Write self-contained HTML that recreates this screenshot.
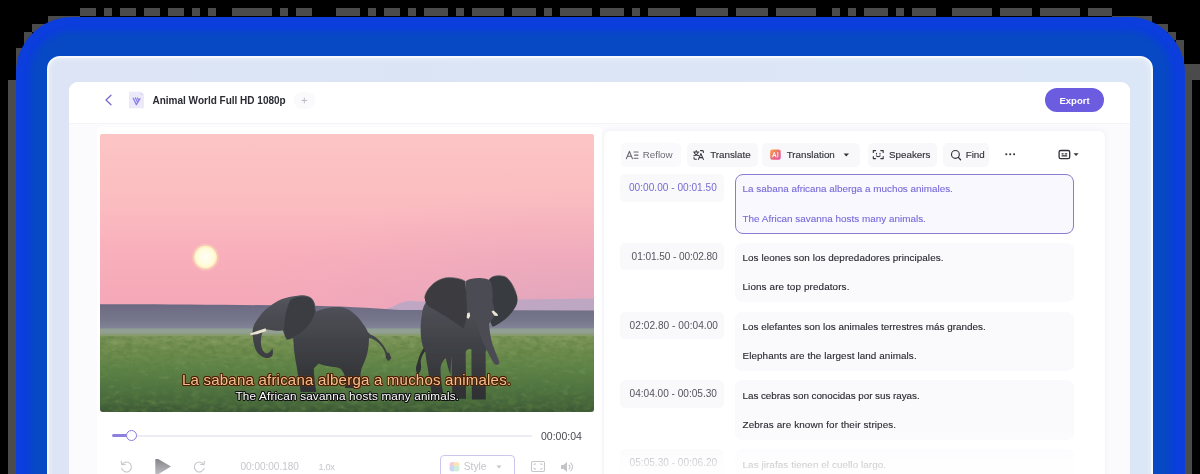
<!DOCTYPE html>
<html>
<head>
<meta charset="utf-8">
<style>
*{box-sizing:border-box;margin:0;padding:0}
html,body{width:1200px;height:474px;overflow:hidden;background:#000;font-family:"Liberation Sans",sans-serif;}
#stage{position:relative;width:1200px;height:474px;overflow:hidden;background:#000}
.abs{position:absolute}
#blue{left:15.5px;top:16.5px;width:1169px;height:520px;border-radius:56px;background:#0b3edc}
#blue2{left:29.5px;top:30.5px;width:1141px;height:520px;border-radius:42px;background:#0748c5;filter:blur(2.5px)}
#frame{left:47px;top:56px;width:1106px;height:460px;border-radius:13px;background:linear-gradient(90deg,#dce4f5 0,#dbe6f6 100%);border:2px solid #f6f8fd;box-shadow:inset 0 0 6px rgba(255,255,255,.55)}
#inner{left:69.2px;top:81.7px;width:1061.3px;height:420px;border-radius:9px 9px 0 0;background:#fbfbfe}
#hdr{left:69.2px;top:81.7px;width:1061.3px;height:42.6px;background:#fff;border-bottom:1px solid #f3f3f8;border-radius:9px 9px 0 0}
.t{position:absolute;white-space:nowrap;line-height:12px;height:12px;filter:blur(.3px)}
#title{left:152.5px;top:94.6px;font-size:10px;font-weight:bold;color:#2a2a33}
#export{left:1045px;top:88px;width:59px;height:24px;border-radius:12px;background:#6b5ce0}
#exportt{left:1059.5px;top:94.5px;font-size:9.5px;color:#fff;font-weight:bold}
#plus{left:294px;top:92px;width:21px;height:17px;border-radius:8px;background:#fafafc}
/* left card */
#lcard{left:96.7px;top:126.5px;width:505px;height:380px;background:#fff;border-radius:4px}
#video{left:100px;top:134px;width:494px;height:277.5px;border-radius:3px;overflow:hidden;background:#f9b9bd}
/* right panel */
#rpanel{left:604px;top:131px;width:501px;height:380px;background:#fff;border-radius:6px;box-shadow:0 0 5px rgba(120,120,180,.12)}
.tb{position:absolute;top:143px;height:24px;border-radius:5px;background:#f8f8fb}
.tbt{font-size:9.8px;color:#33333b;top:148.9px;-webkit-text-stroke:.15px #33333b}
.time{position:absolute;left:620px;width:104px;height:27.5px;border-radius:5px;background:#f9f9fc}
.tt{font-size:10.1px;color:#55555f}
.row{position:absolute;left:734.5px;width:339px;height:59.5px;border-radius:7px;background:#fafafd}
.rt{font-size:9.9px;color:#26262e;left:742.5px;-webkit-text-stroke:.12px currentColor}
.row.sel{border:1px solid #877ed0;background:#f8f8fe;height:60px;border-radius:8px}
.pur{color:#7769d8}
#fade{left:604px;top:425px;width:501px;height:49px;background:linear-gradient(180deg,rgba(255,255,255,0) 0,rgba(255,255,255,.45) 50%,rgba(255,255,255,.75) 76%,rgba(255,255,255,.9) 100%)}
</style>
</head>
<body>
<div id="stage">
<svg class="abs" style="left:0;top:0" width="1200" height="474" viewBox="0 0 1200 474" shape-rendering="crispEdges"><g fill="#4b4b4b"><rect x="80" y="8" width="16" height="8"/><rect x="104" y="8" width="8" height="8"/><rect x="120" y="8" width="16" height="8"/><rect x="144" y="8" width="16" height="8"/><rect x="168" y="8" width="16" height="8"/><rect x="192" y="8" width="8" height="8"/><rect x="208" y="8" width="8" height="8"/><rect x="232" y="8" width="40" height="8"/><rect x="280" y="8" width="8" height="8"/><rect x="296" y="8" width="16" height="8"/><rect x="336" y="8" width="24" height="8"/><rect x="368" y="8" width="8" height="8"/><rect x="384" y="8" width="16" height="8"/><rect x="408" y="8" width="8" height="8"/><rect x="424" y="8" width="24" height="8"/><rect x="456" y="8" width="8" height="8"/><rect x="472" y="8" width="32" height="8"/><rect x="512" y="8" width="24" height="8"/><rect x="544" y="8" width="8" height="8"/><rect x="560" y="8" width="32" height="8"/><rect x="600" y="8" width="24" height="8"/><rect x="632" y="8" width="8" height="8"/><rect x="648" y="8" width="32" height="8"/><rect x="696" y="8" width="32" height="8"/><rect x="736" y="8" width="32" height="8"/><rect x="776" y="8" width="40" height="8"/><rect x="832" y="8" width="8" height="8"/><rect x="848" y="8" width="8" height="8"/><rect x="864" y="8" width="24" height="8"/><rect x="896" y="8" width="8" height="8"/><rect x="912" y="8" width="24" height="8"/><rect x="952" y="8" width="40" height="8"/><rect x="1000" y="8" width="32" height="8"/><rect x="1040" y="8" width="40" height="8"/><rect x="1088" y="8" width="24" height="8"/><rect x="48" y="16" width="32" height="8"/><rect x="32" y="24" width="16" height="8"/><rect x="24" y="32" width="8" height="16"/><rect x="16" y="48" width="8" height="32"/><rect x="8" y="80" width="8" height="400"/><rect x="1112" y="16" width="40" height="8"/><rect x="1152" y="24" width="16" height="8"/><rect x="1168" y="32" width="8" height="8"/><rect x="1176" y="40" width="8" height="24"/><rect x="1184" y="64" width="8" height="420"/><rect x="1192" y="64" width="8" height="16"/></g></svg>
<div id="blue" class="abs"></div>
<div id="blue2" class="abs"></div>
<div id="frame" class="abs"></div>
<div id="inner" class="abs"></div>
<div id="hdr" class="abs"></div>
<!-- header -->
<svg class="abs" style="left:100px;top:90px" width="50" height="20" viewBox="100 90 50 20"><path d="M111 95.2 L106 100 L111 104.8" fill="none" stroke="#7367cc" stroke-width="1.2" stroke-linecap="round" stroke-linejoin="round"/><path d="M129 91.8 H140.5 L144 95 V108.3 H129 Z" fill="#ebe9fa"/><path d="M140.5 91.8 V95 H144Z" fill="#dcd9f5"/><path d="M133.2 98.2 L136.4 104.6 M135.4 97.9 L137.7 102.6 M137.5 98 L138.9 100.8 M140 98.6 L136.4 104.6" stroke="#8a7ee6" stroke-width="1.25" fill="none" stroke-linecap="round"/></svg>
<div id="title" class="t">Animal World Full HD 1080p</div>
<div id="plus" class="abs"><svg width="21" height="17" viewBox="0 0 21 17"><path d="M10.3 5.7 V11.3 M7.5 8.5 H13.1" stroke="#bcbcc6" stroke-width="1"/></svg></div>
<div id="export" class="abs"></div><div id="exportt" class="t">Export</div>
<!-- left -->
<div id="lcard" class="abs"></div>
<div id="video" class="abs">
<svg width="494" height="277.5" viewBox="100 134 494 277.5" preserveAspectRatio="none">
<defs>
<linearGradient id="sky" x1="0" y1="0" x2="0" y2="1"><stop offset="0" stop-color="#fcc5c4"/><stop offset=".35" stop-color="#fbbcc0"/><stop offset=".62" stop-color="#f8aebb"/><stop offset=".85" stop-color="#f5a8b8"/><stop offset="1" stop-color="#f0a6b8"/></linearGradient>
<radialGradient id="skyr" cx="1" cy="1" r=".75" gradientTransform="scale(1 1)"><stop offset="0" stop-color="#cfa3c2" stop-opacity=".75"/><stop offset=".5" stop-color="#dda6c0" stop-opacity=".35"/><stop offset="1" stop-color="#e9a9c0" stop-opacity="0"/></radialGradient>
<linearGradient id="hill" x1="0" y1="0" x2="0" y2="1"><stop offset="0" stop-color="#6c6982"/><stop offset=".6" stop-color="#77788c"/><stop offset="1" stop-color="#858b9c"/></linearGradient>
<linearGradient id="grass" x1="0" y1="0" x2="0" y2="1"><stop offset="0" stop-color="#92a090"/><stop offset=".05" stop-color="#83995f"/><stop offset=".2" stop-color="#739050"/><stop offset=".45" stop-color="#5f8448"/><stop offset=".7" stop-color="#4f7341"/><stop offset=".9" stop-color="#43633a"/><stop offset="1" stop-color="#3a5434"/></linearGradient>
<radialGradient id="sun"><stop offset="0" stop-color="#fffef4"/><stop offset=".75" stop-color="#fffbdc"/><stop offset=".93" stop-color="#fdf0bd"/><stop offset="1" stop-color="#fbdcb4"/></radialGradient>
<linearGradient id="ele" x1="0" y1="0" x2="0" y2="1"><stop offset="0" stop-color="#54555d"/><stop offset=".45" stop-color="#424349"/><stop offset="1" stop-color="#2e3032"/></linearGradient>
<filter id="gn" x="0" y="0" width="100%" height="100%"><feTurbulence type="fractalNoise" baseFrequency=".12 .22" numOctaves="3" seed="4"/><feColorMatrix values="0 0 0 0 .1  0 0 0 0 .2  0 0 0 0 .05  0 0 0 -1.6 1.05"/></filter>
<filter id="gn2" x="0" y="0" width="100%" height="100%"><feTurbulence type="fractalNoise" baseFrequency=".1 .2" numOctaves="2" seed="11"/><feColorMatrix values="0 0 0 0 .65  0 0 0 0 .78  0 0 0 0 .4  0 0 0 1.8 -1.05"/></filter>
<filter id="b1"><feGaussianBlur stdDeviation=".6"/></filter>
<filter id="b2"><feGaussianBlur stdDeviation=".35"/></filter>
</defs>
<rect x="100" y="134" width="494" height="200" fill="url(#sky)"/>
<rect x="100" y="134" width="494" height="200" fill="url(#skyr)"/>
<circle cx="205.5" cy="257.2" r="13.5" fill="#fbd3bc" opacity=".5" filter="url(#b1)"/>
<circle cx="205.5" cy="257.2" r="11.6" fill="url(#sun)"/>
<!-- far pale mountain -->
<path d="M380 311 L392 307 L400 303 L408 300.8 L420 301.5 L440 301 L470 300.3 L520 299.6 L594 298.5 V312 H380Z" fill="#bba8c4" opacity=".9" filter="url(#b1)"/>
<!-- dark hill band -->
<path d="M100 304.3 C160 304 230 305 300 305.5 C340 306 370 308 400 310 L594 310.5 V332 H100Z" fill="url(#hill)" filter="url(#b1)"/>
<rect x="100" y="328.5" width="494" height="6" fill="#929f93" filter="url(#b1)"/>
<rect x="100" y="332.5" width="494" height="80" fill="url(#grass)"/>
<rect x="100" y="336" width="494" height="76" filter="url(#gn)" opacity=".8"/>
<rect x="100" y="336" width="494" height="76" filter="url(#gn2)" opacity=".22"/>
<!-- left elephant -->
<g filter="url(#b2)">
<path fill="url(#ele)" d="M272.9 304 C280 298.5 290 296 302 295.2 C308 295.5 312 298 313.4 301.5 C315 305 315 308 316 311.6 C325 308 333 306.5 341.3 307.3 C346 308 349 309.5 351.4 311.6 C356 315 359 318 361.5 321.8 C364 325 366 328 367.8 331.9 L370.4 334.4 C375 336 378 339 380.5 342 C384 346 386 349 386.8 352.2 L389.2 353 L391.4 358 L388.5 361.2 L385.8 358 L385.4 353.5 C384 349 381 345 378 342.5 C375 340 372 338.5 369 338 C369 345 368 351 366.6 356 C365 361 363 365 361.5 368.6 C360 375 360 381 360.5 388 L345 388 C346.5 380 345 374 341 369 C339 368 337 367.5 336.2 367.3 C330 367 324 365.5 318.5 363.5 L313.8 368.6 C314 376 315 384 316.2 392 L300.6 392 C300 384 298 376 297 368.6 C295 358 293.5 348 293.2 338.2 C291 338.6 289 339.6 286.8 339.5 C285 337 284 334 283 330.6 C278 330.8 273 330.5 267.8 329.4 L264 329.4 C263 331 262 333 261.5 335.7 C260.8 339.5 260.5 343.5 261.5 347 C262.5 350.5 264 353 266.6 353.4 C269 353 271 351 272.4 348.4 C272.8 350 273 351.5 272.9 353.4 C273 355.5 271 357.5 267.8 358 C266 358.2 263.5 357.5 261.5 356 C258.5 354.5 256.5 352 255.2 348.4 C253.8 344.5 253 340 252.7 335.7 C252.5 332 252.5 329 253.9 325.6 C255 322.5 257 319.5 260.3 315.4 C263 311.5 267 308 272.9 304Z"/>
<!-- ear shade -->
<path fill="#3b3c42" d="M291 299 C297 295.5 305 295.2 310 297.5 C314 300 315.2 305 315 310 C314.5 318 309 326 302 331.5 C297 335.5 291 338.5 287 339.3 C284.5 335 283.5 329 284.5 322 C285.5 313 287.5 305 291 299Z"/>
<path fill="none" stroke="#565860" stroke-width=".8" d="M291 299 C297 295.5 305 295.2 310 297.5 C314 300 315.2 305 315 310"/>
<!-- tusk -->
<path fill="#e9e3cf" d="M265.5 328.3 L250.2 333.4 L250.6 335 L257 334.3 L266.5 331Z"/>
</g>
<!-- right elephant -->
<g filter="url(#b2)">
<!-- tail -->
<path fill="#2f3034" d="M424.5 347 C421.5 351 419.5 355 418.5 359 L417 364 C415.5 367 415.6 371 417.5 374 C420 373 421.5 369.5 421 365.5 L420.6 361 C421.5 357 423 353.5 426 350Z"/>
<!-- body & legs -->
<path fill="url(#ele)" d="M431 296 C426 301 422.5 307 422 314 C420.5 322 420.3 330 421 337 C421.5 343 423 348 425.3 352 C426 358 426.8 363 427.8 368 C428.8 376 430 384 431.6 393 L443 393 C441.5 384 440.5 376 440.5 368 C441.5 363 443 360 445.8 358 C447 364 448.5 370 450.5 375 C450.8 369 451 362 451.5 356 C451.5 370 452 385 452.5 398.7 L466 398.7 C466 385 465.8 370 465.7 356 L465.7 352 C467 349 469.5 348.5 471.4 349.5 C471.4 366 471.6 383 472 399.5 L485.8 399.5 C485.8 384 485.7 368 485.6 352 C486.6 350 487.5 348 488.3 346 L480 300 L465 290Z"/>
<!-- right ear -->
<path fill="#393a40" d="M488 281 C490 277.5 494 275.6 499 275.8 C503 275.8 506.5 276.8 508.5 279.5 C512 283 514 288 516 293 C518 297 518 302 516 306 C513 312 508 317 502 321.5 C498.5 324 495.5 326 492.5 326.8 C490 322 489 316 489.5 310Z"/>
<!-- head + trunk -->
<path fill="#4b4c53" d="M466 281 C470 278.5 476 277.8 482 278.2 C486 278.4 489.5 279.5 491 282 C492.5 288 493 295 492.5 301 C493.5 306 494.5 310 495 314 C493.5 318 491.5 321 489 323.5 C489.5 330 490.5 337 492 343 C493.5 347.5 495.5 352 497 356 C498.5 359 499.3 361.5 499.3 363.5 C498.5 365.3 495.5 365.3 494 363.5 C491.5 359 489 355 487 350.5 C483.5 344 480.5 337 478.5 330 C477 326 476 322.5 475.5 319 C471.5 317 468.5 314.5 467.5 311 C466.5 305 466 299 466 293Z"/>
<!-- left ear -->
<path fill="#3a3b41" d="M465.5 281.5 C460 278 452 277.2 445 278 C439 279.5 435 282 431.5 285.5 C427.5 289.5 425 294 424.7 298 C425 302 426.5 304.5 429 306.5 C434 309.5 440 313 446 316.5 C452 320.5 458 324.5 463.5 328.5 C466.5 322 467.5 315 467 308 C466.5 299 466 290 465.5 281.5Z"/>
<path fill="none" stroke="#54565e" stroke-width=".8" d="M465.5 281.5 C460 278 452 277.2 445 278 C439 279.5 435 282 431.5 285.5 C427.5 289.5 425 294 424.7 298"/>
<path fill="none" stroke="#54565e" stroke-width=".8" d="M488 281 C490 277.5 494 275.6 499 275.8 C503 275.8 506.5 276.8 508.5 279.5 C512 283 514 288 516 293"/>
<!-- tusks -->
<path fill="#ece6d2" d="M467.3 313 L469.6 312.6 L470.2 316 L468.4 319 L466.6 317.5Z"/>
<path fill="#ece6d2" d="M491.5 311.5 L493.5 310.5 L497.5 314 L498 316 L494.5 315.8Z"/>
</g>
</svg>
</div>
<div class="t" id="sub1" style="left:182px;top:372.2px;font-size:15px;line-height:16px;height:16px;letter-spacing:.22px;color:#f4bf8e;text-shadow:-1px 0 0 #4a1f06,1px 0 0 #4a1f06,0 -1px 0 #4a1f06,0 1px 0 #4a1f06,-.7px -.7px 0 #4a1f06,.7px .7px 0 #4a1f06,.7px -.7px 0 #4a1f06,-.7px .7px 0 #4a1f06,0 0 2.5px #c05a18">La sabana africana alberga a muchos animales.</div>
<div class="t" id="sub2" style="left:235.5px;top:389.2px;font-size:11.7px;line-height:13px;height:13px;letter-spacing:.19px;color:#fff;text-shadow:-1px 0 0 #111,1px 0 0 #111,0 -1px 0 #111,0 1px 0 #111,-.7px -.7px 0 #111,.7px .7px 0 #111,.7px -.7px 0 #111,-.7px .7px 0 #111">The African savanna hosts many animals.</div>
<!-- controls -->
<div class="abs" style="left:131px;top:434.5px;width:401px;height:2.5px;background:#ececf2;border-radius:2px"></div>
<div class="abs" style="left:112px;top:434px;width:16px;height:3px;background:#8e80de;border-radius:2px"></div>
<div class="abs" style="left:125.5px;top:430px;width:11px;height:11px;border-radius:6px;background:#fff;border:1.6px solid #8a7cdc"></div>
<div class="t" style="left:541px;top:429.5px;font-size:10.5px;color:#4a4a52">00:00:04</div>
<!-- bottom controls -->
<svg class="abs" style="left:119px;top:459px" width="90" height="15" viewBox="119 459 90 15">
<defs><linearGradient id="pg" x1="0" y1="0" x2="0" y2="1"><stop offset="0" stop-color="#7f7f84"/><stop offset="1" stop-color="#c4c4c8"/></linearGradient></defs>
<path d="M122.3 464.2 A5 5 0 1 1 121.6 468.2" fill="none" stroke="#c6c6cb" stroke-width="1.1" stroke-linecap="round"/>
<path d="M121.2 461.2 L121.9 464.8 L125.4 464.2" fill="none" stroke="#c6c6cb" stroke-width="1.1" stroke-linecap="round" stroke-linejoin="round"/>
<path d="M155.3 457.3 L171 466.6 L155.3 476Z" fill="url(#pg)"/>
<path d="M203.5 464.2 A5 5 0 1 0 204.2 468.2" fill="none" stroke="#c6c6cb" stroke-width="1.1" stroke-linecap="round"/>
<path d="M204.6 461.2 L203.9 464.8 L200.4 464.2" fill="none" stroke="#c6c6cb" stroke-width="1.1" stroke-linecap="round" stroke-linejoin="round"/>
</svg>
<div class="t" style="left:240.5px;top:460.5px;font-size:10px;color:#c6c6cc">00:00:00.180</div>
<div class="t" style="left:318.5px;top:460.5px;font-size:9.2px;letter-spacing:-.35px;color:#c6c6cc">1.0x</div>
<div class="abs" style="left:440px;top:454.5px;width:74.5px;height:30px;border:1.5px solid #cbc7ec;border-radius:4px;background:#fff"></div>
<svg class="abs" style="left:448px;top:460px" width="13" height="13" viewBox="0 0 13 13"><circle cx="4.5" cy="5" r="3" fill="#f7c9d8"/><circle cx="8.5" cy="5" r="3" fill="#f9e5b8"/><circle cx="4.5" cy="8.5" r="3" fill="#c9d6f8"/><circle cx="8.5" cy="8.5" r="3" fill="#cdeedd"/></svg>
<div class="t" style="left:463.7px;top:460.5px;font-size:10.3px;color:#c4c4cc">Style</div>
<svg class="abs" style="left:495.5px;top:465px" width="6" height="4" viewBox="0 0 6 4"><path d="M.5 .5 L3 3.5 L5.5 .5Z" fill="#c6c6cc"/></svg>
<svg class="abs" style="left:530px;top:460px" width="16" height="13" viewBox="0 0 16 13"><rect x="1.5" y="1.5" width="13" height="10" rx="1.5" fill="none" stroke="#c6c6ca" stroke-width="1.1"/><path d="M4 5 V4 H6 M10 4 H12 V5 M12 8 V9 H10 M6 9 H4 V8" fill="none" stroke="#c6c6ca" stroke-width="1"/></svg>
<svg class="abs" style="left:560px;top:461px" width="15" height="12" viewBox="0 0 15 12"><path d="M1 4 H3.5 L7 1 V11 L3.5 8 H1Z" fill="#c4c4c8"/><path d="M9 4 A2.5 2.5 0 0 1 9 8 M10.8 2.2 A5 5 0 0 1 10.8 9.8" fill="none" stroke="#c4c4c8" stroke-width="1.1" stroke-linecap="round"/></svg>
<!-- right -->
<div id="rpanel" class="abs"></div>
<div class="tb" style="left:621px;width:60px;background:#fafafd"></div>
<div class="tb" style="left:687px;width:70.5px"></div>
<div class="tb" style="left:762px;width:98px"></div>
<div class="tb" style="left:868px;width:68.5px"></div>
<div class="tb" style="left:942.5px;width:46px"></div>
<div class="t tbt" style="left:642.7px;color:#6a6a72;-webkit-text-stroke:0">Reflow</div>
<div class="t tbt" style="left:710.2px">Translate</div>
<div class="t tbt" style="left:786.7px">Translation</div>
<div class="t tbt" style="left:889px">Speakers</div>
<div class="t tbt" style="left:965.7px">Find</div>

<!-- toolbar icons -->
<svg class="abs" style="left:620px;top:145px" width="470" height="20" viewBox="620 145 470 20">
<defs><linearGradient id="aig" x1="0" y1="0" x2="1" y2="1"><stop offset="0" stop-color="#f7a944"/><stop offset=".5" stop-color="#ef6f6c"/><stop offset="1" stop-color="#e24bb0"/></linearGradient></defs>
<!-- reflow -->
<g stroke="#66666e" stroke-width="1.15" fill="none" stroke-linecap="round" stroke-linejoin="round">
<path d="M626.4 158.6 L629.4 151.4 L632.4 158.6 M627.5 156.2 H631.3"/>
<path d="M634 152 H638 M634.6 155.1 H638 M634 158.2 H638"/>
</g>
<!-- translate -->
<g stroke="#33333b" stroke-width="1.05" fill="none" stroke-linecap="round" stroke-linejoin="round">
<path d="M693.6 152 H698.8 M696.2 150.5 V152 M694.3 152 C694.6 154 696.4 155.4 698.6 155.6 M698.2 152 C697.8 154 696 155.4 693.8 155.8"/>
<path d="M698.4 159.4 L700.9 153.6 L703.4 159.4 M699.3 157.6 H702.5"/>
<path d="M700.5 150.6 H702.4 A1 1 0 0 1 703.4 151.6 V152.4"/>
<path d="M696.4 159.2 H695 A1 1 0 0 1 694 158.2 V157.4"/>
</g>
<!-- AI -->
<rect x="770.2" y="149.5" width="10.5" height="10.2" rx="2" fill="url(#aig)"/>
<path d="M772.6 157 L774.3 152.4 L776 157 M773.2 155.6 H775.4 M777.8 152.4 V157" stroke="#fff" stroke-width=".95" fill="none" stroke-linecap="round" stroke-linejoin="round"/>
<path d="M843.6 153.6 H849 L846.3 156.6Z" fill="#33333b"/>
<!-- speakers -->
<g stroke="#33333b" stroke-width="1.1" fill="none" stroke-linecap="round" stroke-linejoin="round">
<path d="M873.3 152.5 V150.6 H875.6 M880.8 150.6 H883.2 V152.5 M883.2 156.6 V158.6 H880.8 M875.6 158.6 H873.3 V156.6"/>
<path d="M876.5 153.2 V154 M880 153.2 V154"/>
<path d="M876.4 155.8 C877.4 156.8 879.1 156.8 880.1 155.8"/>
</g>
<!-- find -->
<circle cx="955.4" cy="154.4" r="3.9" fill="none" stroke="#33333b" stroke-width="1.15"/>
<path d="M958.3 157.4 L960.6 159.8" stroke="#33333b" stroke-width="1.25" stroke-linecap="round"/>
<!-- dots -->
<circle cx="1006.3" cy="154.3" r="1.05" fill="#33333b"/><circle cx="1010.2" cy="154.3" r="1.05" fill="#33333b"/><circle cx="1014.1" cy="154.3" r="1.05" fill="#33333b"/>
<!-- caption -->
<rect x="1059.1" y="150.5" width="10.6" height="8.2" rx="1.6" fill="none" stroke="#2f2f36" stroke-width="1.3"/>
<path d="M1061.6 155.8 H1067.2 M1061.6 153.8 H1063.6 M1064.8 153.8 H1067.2" stroke="#2f2f36" stroke-width="1.2"/>
<path d="M1073.6 153.3 H1078.6 L1076.1 156Z" fill="#33333b"/>
</svg>
<div class="row sel" style="top:174px"></div>
<div class="time" style="top:174px"></div>
<div class="t tt pur" style="left:629.0px;top:181.8px;letter-spacing:0.011px">00:00.00 - 00:01.50</div>
<div class="t rt pur" style="top:183.4px;letter-spacing:0.002px">La sabana africana alberga a muchos animales.</div>
<div class="t rt pur" style="top:212.5px;letter-spacing:0.015px">The African savanna hosts many animals.</div>
<div class="row" style="top:242.7px"></div>
<div class="time" style="top:242.7px"></div>
<div class="t tt" style="left:631.6px;top:250.5px;letter-spacing:-0.079px">01:01.50 - 00:02.80</div>
<div class="t rt" style="top:252.1px;letter-spacing:0.064px">Los leones son los depredadores principales.</div>
<div class="t rt" style="top:281.2px;letter-spacing:0.113px">Lions are top predators.</div>
<div class="row" style="top:311.7px"></div>
<div class="time" style="top:311.7px"></div>
<div class="t tt" style="left:629.6px;top:319.6px;letter-spacing:0.042px">02:02.80 - 00:04.00</div>
<div class="t rt" style="top:321.2px;letter-spacing:0.022px">Los elefantes son los animales terrestres más grandes.</div>
<div class="t rt" style="top:350.3px;letter-spacing:0.090px">Elephants are the largest land animals.</div>
<div class="row" style="top:380.4px"></div>
<div class="time" style="top:380.4px"></div>
<div class="t tt" style="left:629.6px;top:388.2px;letter-spacing:-0.011px">04:04.00 - 00:05.30</div>
<div class="t rt" style="top:389.8px;letter-spacing:-0.046px">Las cebras son conocidas por sus rayas.</div>
<div class="t rt" style="top:418.9px;letter-spacing:0.111px">Zebras are known for their stripes.</div>
<div class="row" style="top:449.1px"></div>
<div class="time" style="top:449.1px"></div>
<div class="t tt" style="left:629.6px;top:456.9px;letter-spacing:0.000px">05:05.30 - 00:06.20</div>
<div class="t rt" style="top:458.5px;letter-spacing:0.074px">Las jirafas tienen el cuello largo.</div>
<div id="fade" class="abs"></div>
</div>
</body>
</html>
